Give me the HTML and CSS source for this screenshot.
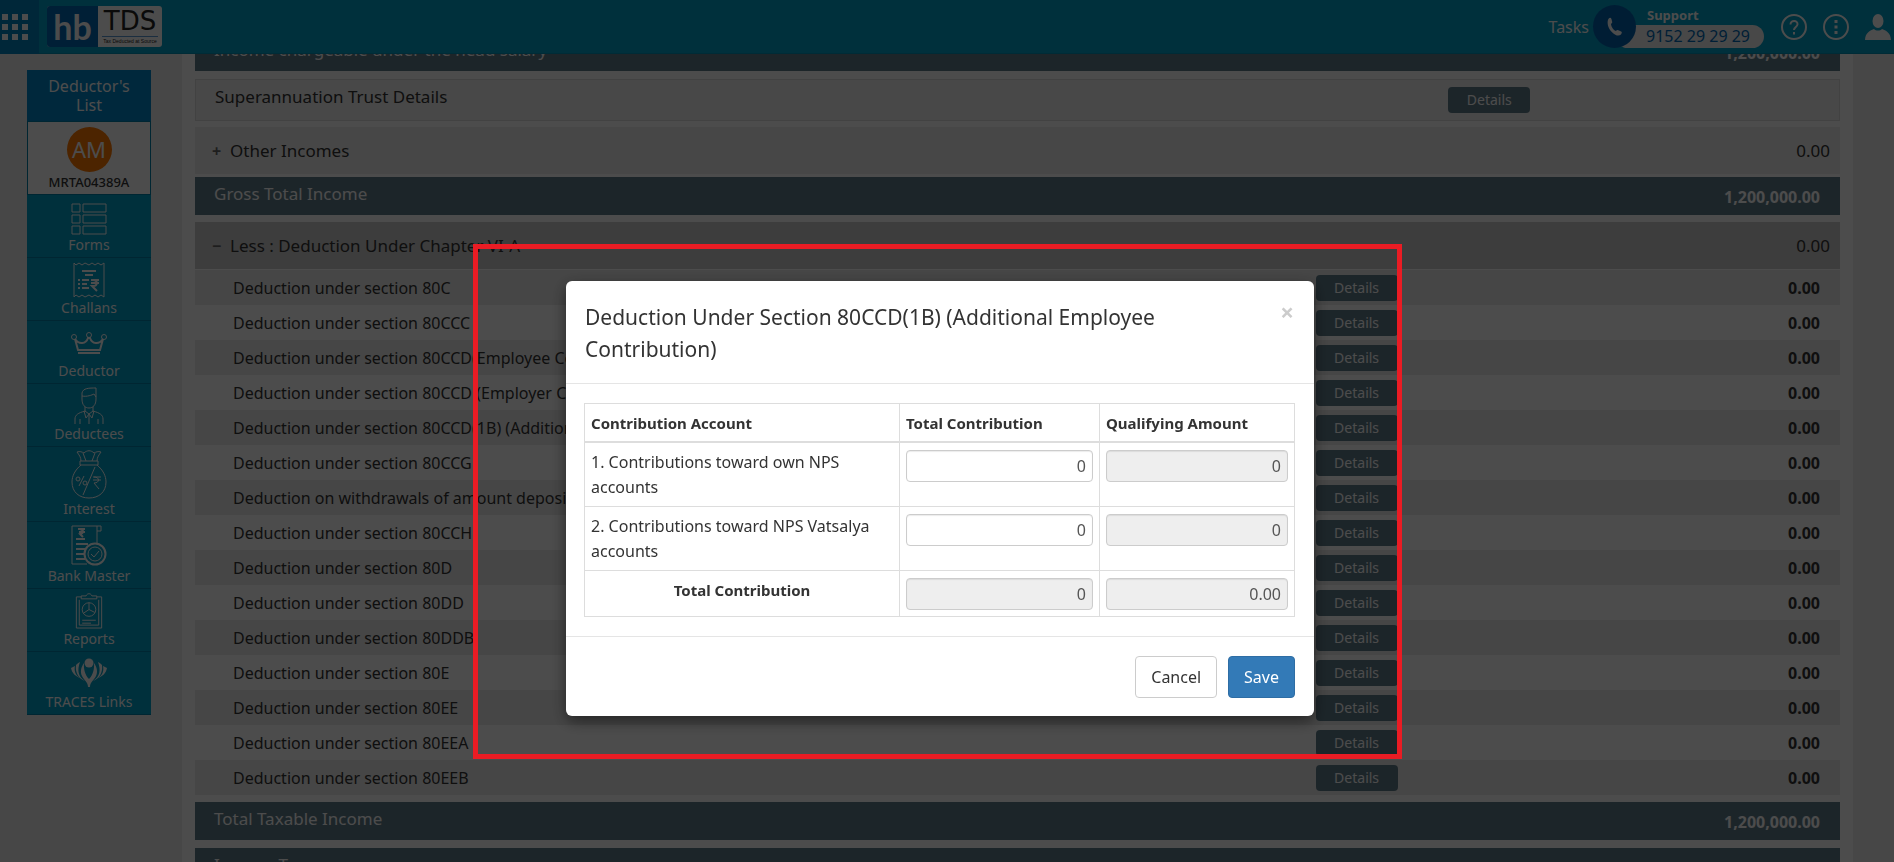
FILE: index.html
```html
<!DOCTYPE html>
<html lang="en">
<head>
	<meta charset="utf-8">
	<title>hb TDS</title>
	<link rel="stylesheet" href="styles.css">
</head>

<body>
	<header class="topbar">
		<button class="apps" type="button" aria-label="Apps">
			<svg width="26" height="26" viewBox="0 0 26 26" fill="#fff">
				<path d="M0 0h6v6H0zM10 0h6v6h-6zM20 0h6v6h-6zM0 10h6v6H0zM10 10h6v6h-6zM20 10h6v6h-6zM0 20h6v6H0zM10 20h6v6h-6zM20 20h6v6h-6z"/>
			</svg>
		</button>
		<a class="logo" href="#">
			<span class="logo-hb">hb</span>
			<span class="logo-tds">TDS<small>Tax Deducted at Source</small></span>
		</a>
		<nav class="tools">
			<a class="tasks" href="#">Tasks</a>
			<div class="support">
				<span class="support-icon">
					<svg width="16" height="20" viewBox="0 0 18 22" fill="#fff">
						<path d="M2 1.500C3 .3 4.500.5 5 2l.9 3.500c.2 1-1.400 1.800-1.400 2.800.6 3 2.600 5.700 4.700 7 .9.4 1.900-1.200 2.900-.9l3.800 1.800c1.200.8.9 2.200-.2 3.200-1.600 1.400-4 1.600-6.300.2C4.500 16.600 1.300 12 .8 7.500.5 5 .9 2.800 2 1.500z"/>
					</svg>
				</span>
				<div class="support-text">
					<strong>Support</strong>
					<span>9152 29 29 29</span>
				</div>
			</div>
			<button class="icon-btn" type="button" aria-label="Help">
				<svg width="26" height="26" viewBox="0 0 26 26" fill="none" stroke="#fff" stroke-width="2">
					<circle cx="13" cy="13" r="12"/>
					<path d="M9.500 10.500c0-5 7.500-4.500 7 0-.3 2.500-3.500 2.500-3.500 5.500M13 18v2.500"/>
				</svg>
			</button>
			<button class="icon-btn" type="button" aria-label="More">
				<svg width="26" height="26" viewBox="0 0 26 26" fill="#fff">
					<circle cx="13" cy="13" r="12" fill="none" stroke="#fff" stroke-width="2"/>
					<path d="M11.500 6h3v3h-3zM11.500 11.500h3v3h-3zM11.500 17h3v3h-3z"/>
				</svg>
			</button>
			<button class="icon-btn" type="button" aria-label="Account">
				<svg width="26" height="26" viewBox="0 0 26 26" fill="#fff">
					<ellipse cx="13" cy="7" rx="5.500" ry="7"/>
					<path d="M0 26c.5-7 4-9 9-11 2 2 6 2 8 0 5 2 8.500 4 9 11z"/>
				</svg>
			</button>
		</nav>
	</header>

	<div class="page">
		<aside class="sidebar">
			<h2>Deductor's<br>List</h2>
			<a class="profile" href="#">
				<span class="avatar">AM</span>
				<strong>MRTA04389A</strong>
			</a>
			<a class="side-link" href="#">
				<svg width="36" height="32" viewBox="0 0 36 32">
					<path d="M1 1h8v8H1zM12 1h23v8H12zM1 12h8v8H1zM12 12h23v8H12zM1 23h8v8H1zM12 23h23v8H12z"/>
				</svg>
				Forms
			</a>
			<a class="side-link" href="#">
				<svg width="32" height="36" viewBox="0 0 32 36">
					<path d="M1 1l2 2 3-2 3 2 3-2 4 2 3-2 3 2 3-2 3 2 3-2v34l-3-2-3 2-3-2-3 2-3-2-4 2-3-2-3 2-3-2-2 2z"/>
					<path stroke-width="2" d="M9 9h14M12 13h8M5 18h2M9 18h7M5 22h2M9 22h5M5 26h2M9 26h7"/>
					<path stroke-width="2" d="M18 18h8M18 21h8M20 18c5 0 5 6 0 6h-1l5 5"/>
				</svg>
				Challans
			</a>
			<a class="side-link" href="#">
				<svg width="36" height="30" viewBox="0 0 36 30">
					<circle cx="3" cy="6" r="2.500"/><circle cx="18" cy="4" r="2.500"/><circle cx="33" cy="6" r="2.500"/>
					<path stroke-width="2" d="M4 8l3 11h22l3-11c-4 6-11 5-13-1h-2c-2 6-9 7-13 1M7 22h22"/>
				</svg>
				Deductor
			</a>
			<a class="side-link" href="#">
				<svg width="30" height="37" viewBox="0 0 30 37">
					<path d="M8 12V6c1-5 7-5 14-5v11c0 6-3 9-7 9s-7-3-7-9zM8 9c5 1 10-1 12-2l2 3M1 37v-5c0-4 3-6 10-8M29 37v-5c0-4-3-6-10-8M11 20v4l4 3 4-3v-4M10 24l2 7 3-4 3 4 2-7M6 37v-5M24 37v-5M15 28v9"/>
				</svg>
				Deductees
			</a>
			<a class="side-link" href="#">
				<svg width="36" height="49" viewBox="0 0 36 49">
					<path d="M10 11C10 7 8 5 6 2c3-1 5 0 7 1 3-3 7-3 10 0 2-1 4-2 7-1-2 3-4 5-4 9M9 11h18v4H9zM12 3l3 8M24 3l-3 8M10 15C4 20 1 26 1 32c0 10 7 16 17 16s17-6 17-16c0-6-3-12-9-17M24 17L12 45"/>
					<circle cx="7" cy="29" r="2"/><circle cx="14" cy="33" r="2"/>
					<path d="M13 26L8 36M22 27h8M22 30h8M23 27c6 0 6 6 0 6l5 6"/>
				</svg>
				Interest
			</a>
			<a class="side-link" href="#">
				<svg width="36" height="41" viewBox="0 0 36 41">
					<path d="M1 1h29v5h-4M26 1v18M1 1v38h15"/>
					<path stroke-width="2" d="M7 4h7M8 7h6M9 4c4 1 4 4 0 5l3 3M5 14h9M5 19h12M5 24h9M5 29h8M5 34h9"/>
					<circle cx="24" cy="29" r="10.500" stroke-width="2"/><circle cx="24" cy="29" r="7"/>
					<path d="M20 29l3 3 5-6"/>
				</svg>
				Bank Master
			</a>
			<a class="side-link" href="#">
				<svg width="28" height="36" viewBox="0 0 28 37">
					<path d="M6 4H1v32h26V4h-5M6 6V3h5c1-3 5-3 6 0h5v3zM4 7v26h20V7M7 28h14M7 31h9"/>
					<circle cx="14" cy="17" r="7"/>
					<path d="M14 17V10M14 17l6 3M14 17l-6 4"/>
				</svg>
				Reports
			</a>
			<a class="side-link" href="#">
				<svg width="36" height="34" viewBox="0 0 36 34">
					<g fill="#fff" stroke="none">
						<circle cx="18" cy="5" r="4.500"/>
						<path d="M17 29c0-5-4-7-6-11-2-4-1-9 2-13-.5 6 1 12 5 16 4-4 5.500-10 5-16 3 4 4 9 2 13-2 4-6 6-6 11z"/>
						<path d="M14 23C7 19 6 12 9 4 7 5 6 6 5 7c-1 8 3 14 9 16zM22 23c7-4 8-11 5-19 2 1 3 2 4 3 1 8-3 14-9 16z"/>
						<path d="M9 20C4 17 3 12 4 8L0 10c1 5 4 8 9 10zM27 20c5-3 6-8 5-12l4 2c-1 5-4 8-9 10z"/>
					</g>
				</svg>
				TRACES Links
			</a>
		</aside>

		<main class="panel">
			<div class="bar total">
				<span>Income chargeable under the head salary</span>
				<strong>1,200,000.00</strong>
			</div>
			<div class="bar trust">
				<span>Superannuation Trust Details</span>
				<button class="details" type="button">Details</button>
			</div>
			<div class="bar group">
				<button class="toggle" type="button"><b>+</b>Other Incomes</button>
				<span>0.00</span>
			</div>
			<div class="bar total after-group">
				<span>Gross Total Income</span>
				<strong>1,200,000.00</strong>
			</div>
			<div class="bar group open">
				<button class="toggle" type="button"><b>&minus;</b>Less : Deduction Under Chapter VI-A</button>
				<span>0.00</span>
			</div>
			<table class="deductions">
				<tr><td>Deduction under section 80C</td><td><button class="details" type="button">Details</button></td><td>0.00</td></tr>
				<tr><td>Deduction under section 80CCC</td><td><button class="details" type="button">Details</button></td><td>0.00</td></tr>
				<tr><td>Deduction under section 80CCD(Employee Contribution)</td><td><button class="details" type="button">Details</button></td><td>0.00</td></tr>
				<tr><td>Deduction under section 80CCD (Employer Contribution)</td><td><button class="details" type="button">Details</button></td><td>0.00</td></tr>
				<tr><td>Deduction under section 80CCD(1B) (Additional Employee Contribution)</td><td><button class="details" type="button">Details</button></td><td>0.00</td></tr>
				<tr><td>Deduction under section 80CCG</td><td><button class="details" type="button">Details</button></td><td>0.00</td></tr>
				<tr><td>Deduction on withdrawals of amount deposited</td><td><button class="details" type="button">Details</button></td><td>0.00</td></tr>
				<tr><td>Deduction under section 80CCH</td><td><button class="details" type="button">Details</button></td><td>0.00</td></tr>
				<tr><td>Deduction under section 80D</td><td><button class="details" type="button">Details</button></td><td>0.00</td></tr>
				<tr><td>Deduction under section 80DD</td><td><button class="details" type="button">Details</button></td><td>0.00</td></tr>
				<tr><td>Deduction under section 80DDB</td><td><button class="details" type="button">Details</button></td><td>0.00</td></tr>
				<tr><td>Deduction under section 80E</td><td><button class="details" type="button">Details</button></td><td>0.00</td></tr>
				<tr><td>Deduction under section 80EE</td><td><button class="details" type="button">Details</button></td><td>0.00</td></tr>
				<tr><td>Deduction under section 80EEA</td><td><button class="details" type="button">Details</button></td><td>0.00</td></tr>
				<tr><td>Deduction under section 80EEB</td><td><button class="details" type="button">Details</button></td><td>0.00</td></tr>
			</table>
			<div class="bar total">
				<span>Total Taxable Income</span>
				<strong>1,200,000.00</strong>
			</div>
			<div class="bar total">
				<span>Income Tax</span>
				<strong>172,500.00</strong>
			</div>
		</main>
	</div>

	<div class="backdrop">
		<form class="modal" role="dialog" aria-labelledby="modal-title">
			<div class="modal-header">
				<h1 id="modal-title">Deduction Under Section 80CCD(1B) (Additional Employee Contribution)</h1>
				<button class="close" type="button" aria-label="Close">&times;</button>
			</div>
			<div class="modal-body">
				<table class="contributions">
					<thead>
						<tr>
							<th>Contribution Account</th>
							<th>Total Contribution</th>
							<th>Qualifying Amount</th>
						</tr>
					</thead>
					<tbody>
						<tr>
							<td><label for="own">1. Contributions toward own NPS accounts</label></td>
							<td><input id="own" type="text" value="0"></td>
							<td><input type="text" value="0" aria-label="Own NPS qualifying amount" readonly></td>
						</tr>
						<tr>
							<td><label for="vatsalya">2. Contributions toward NPS Vatsalya accounts</label></td>
							<td><input id="vatsalya" type="text" value="0"></td>
							<td><input type="text" value="0" aria-label="NPS Vatsalya qualifying amount" readonly></td>
						</tr>
						<tr class="sum">
							<td><label for="sum">Total Contribution</label></td>
							<td><input id="sum" type="text" value="0" readonly></td>
							<td><input type="text" value="0.00" aria-label="Total qualifying amount" readonly></td>
						</tr>
					</tbody>
				</table>
			</div>
			<div class="modal-footer">
				<button class="btn" type="button">Cancel</button>
				<button class="btn primary" type="submit">Save</button>
			</div>
		</form>
	</div>

	<div class="highlight"></div>
</body>
</html>
```
FILE: styles.css
```css
* {
	box-sizing: border-box;
}

body {
	margin: 0;
	height: 100vh;
	overflow: hidden;
	background: #eee;
	color: #333;
	font-family: "Noto Sans", "Open Sans", sans-serif;
	font-size: 16px;
}

button, input {
	font: inherit;
	color: inherit;
}

button {
	padding: 0;
	border: 0;
	background: none;
}

a {
	color: inherit;
	text-decoration: none;
}

svg {
	display: block;
}

/* top bar */
.topbar {
	position: fixed;
	top: 0;
	left: 0;
	right: 0;
	z-index: 1;
	height: 54px;
	display: flex;
	align-items: center;
	background: #00a0c8;
	border-bottom: 1px solid #008fb4;
	color: #fff;
}

.apps {
	width: 39px;
	height: 54px;
	padding-left: 2px;
	background: #0082c0;
}

.logo {
	display: flex;
	width: 115px;
	height: 41px;
	margin-left: 8px;
	border-radius: 3px;
	background: #fff;
}

.logo-hb {
	width: 51px;
	border-radius: 3px 0 0 3px;
	background: #0069b4;
	font-family: Lato, sans-serif;
	font-size: 34px;
	font-weight: bold;
	line-height: 41px;
	text-align: center;
}

.logo-tds {
	flex: 1;
	color: #222;
	font-family: "DejaVu Sans", sans-serif;
	font-size: 26px;
	line-height: 30px;
	text-align: center;
}

.logo-tds small {
	display: block;
	margin: 0 4px;
	border-top: 1px solid #5b9bd5;
	font-family: "Liberation Sans", sans-serif;
	font-size: 5px;
	line-height: 9px;
	white-space: nowrap;
}

.tools {
	margin-left: auto;
	display: flex;
	align-items: center;
	padding-right: 3px;
}

.tasks {
	margin-right: 4px;
}

.support {
	display: flex;
	align-items: center;
	margin-right: 17px;
}

.support-icon {
	z-index: 1;
	width: 43px;
	height: 43px;
	display: flex;
	align-items: center;
	justify-content: center;
	border-radius: 50%;
	background: #0062b0;
}

.support-text {
	margin-left: -20px;
	display: flex;
	flex-direction: column;
	font-size: 13px;
}

.support-text strong {
	padding-left: 31px;
	line-height: 19px;
}

.support-text span {
	width: 148px;
	height: 23px;
	padding-left: 30px;
	border-radius: 12px;
	background: #f0f0f0;
	color: #0069b4;
	font-size: 16px;
	line-height: 23px;
}

.icon-btn + .icon-btn {
	margin-left: 16px;
}

/* layout */
.page {
	display: flex;
	align-items: flex-start;
}

.sidebar {
	width: 124px;
	flex: none;
	margin: 70px 31px 0 27px;
	background: #00a0c8;
	color: #fff;
	text-align: center;
}

.sidebar h2 {
	margin: 0;
	padding: 7px 0 6px;
	background: #0086c8;
	font-size: 16px;
	font-weight: normal;
	line-height: 19px;
}

.profile {
	height: 74px;
	padding-top: 5px;
	display: flex;
	flex-direction: column;
	align-items: center;
	border: 1px solid #0080a8;
	background: #fff;
	color: #333;
	font-size: 13px;
	line-height: 20px;
}

.profile strong {
	font-weight: 500;
}

.avatar {
	width: 45px;
	height: 45px;
	border-radius: 50%;
	background: #ff7800;
	color: #fff;
	font-size: 22px;
	line-height: 45px;
}

.side-link {
	display: flex;
	flex-direction: column;
	align-items: center;
	justify-content: flex-end;
	min-height: 63px;
	padding: 3px 0;
	border-bottom: 1px solid #0080a8;
	font-size: 14px;
	line-height: 19px;
}

.side-link svg {
	fill: none;
	stroke: #fff;
}

/* salary panel */
.panel {
	flex: 1;
	margin-right: 41px;
	padding: 33px 13px 0;
	background: #fff;
}

.bar {
	display: flex;
	justify-content: space-between;
	margin-bottom: 8px;
	padding: 0 20px 0 19px;
	font-size: 17px;
}

.total {
	height: 38px;
	background: #607d8b;
	color: #fff;
	line-height: 34px;
}

.total strong {
	line-height: 40px;
	font-size: 16px;
}

.trust {
	height: 42px;
	margin-bottom: 6px;
	border: 1px solid #ddd;
	background: #f0f0f0;
	line-height: 34px;
}

.trust .details {
	margin: 7px 18% 0 0;
}

.group {
	height: 47px;
	margin-bottom: 3px;
	padding: 0 10px 0 17px;
	background: #eee;
	line-height: 47px;
}

.after-group {
	margin-bottom: 7px;
}

.open {
	margin-bottom: 1px;
	background: #ccc;
}

.toggle b {
	display: inline-block;
	width: 18px;
	color: #666;
	font-size: 16px;
	text-align: left;
}

.details {
	width: 82px;
	height: 26px;
	border-radius: 4px;
	background: #607d8b;
	color: #fff;
	font-size: 14px;
	line-height: 26px;
}

.deductions {
	width: 100%;
	margin-bottom: 7px;
	border-collapse: collapse;
	table-layout: fixed;
}

.deductions td {
	height: 35px;
	padding: 0;
	line-height: 26px;
}

.deductions tr:nth-child(odd) {
	background: #ebebeb;
}

.deductions td:first-child {
	width: 68%;
	padding: 0 0 0 38px;
}

.deductions td:last-child {
	width: 16%;
	padding-right: 20px;
	font-weight: bold;
	text-align: right;
}

.deductions .details {
	display: block;
	margin-left: 2px;
}

/* modal */
.backdrop {
	position: fixed;
	inset: 0;
	z-index: 2;
	display: flex;
	align-items: flex-start;
	justify-content: center;
	padding: 281px 14px 0 0;
	background: rgba(0, 0, 0, .7);
}

.modal {
	width: 748px;
	border-radius: 6px;
	background: #fff;
	box-shadow: 0 5px 15px rgba(0, 0, 0, .5);
}

.modal-header {
	display: flex;
	align-items: flex-start;
	justify-content: space-between;
	padding: 20px 20px 18px 19px;
	border-bottom: 1px solid #e5e5e5;
}

.modal-header h1 {
	width: 600px;
	margin: 0;
	font-size: 21px;
	font-weight: normal;
	line-height: 32px;
}

.close {
	color: #ccc;
	font-size: 24px;
	font-weight: bold;
	line-height: 22px;
}

.modal-body {
	padding: 19px 19px 19px 18px;
}

.contributions {
	width: 100%;
	border-collapse: collapse;
	table-layout: fixed;
}

.contributions th, .contributions td {
	padding: 7px 6px 6px;
	border: 1px solid #ddd;
	line-height: 25px;
	text-align: left;
	vertical-align: top;
}

.contributions th {
	padding-bottom: 5px;
	border-bottom-width: 2px;
	font-size: 15px;
}

.contributions th:nth-child(1) {
	width: 315px;
}

.contributions th:nth-child(2) {
	width: 200px;
}

.contributions label {
	display: block;
}

.contributions input {
	display: block;
	width: 100%;
	height: 32px;
	padding: 0 6px;
	border: 1px solid #ccc;
	border-radius: 4px;
	box-shadow: inset 0 1px 1px rgba(0, 0, 0, .08);
	color: #555;
	text-align: right;
}

.contributions input[readonly] {
	background: #eee;
}

.sum label {
	font-size: 15px;
	font-weight: bold;
	text-align: center;
}

.modal-footer {
	display: flex;
	justify-content: flex-end;
	gap: 11px;
	padding: 19px 19px 18px;
	border-top: 1px solid #e5e5e5;
}

.btn {
	height: 42px;
	padding: 0 15px;
	border: 1px solid #ccc;
	border-radius: 4px;
	background: #fff;
}

.primary {
	border-color: #2e6da4;
	background: #337ab7;
	color: #fff;
}

/* red frame round the dialog */
.highlight {
	position: absolute;
	z-index: 3;
	top: 244px;
	left: 473px;
	width: 929px;
	height: 515px;
	border: 5px solid #ea1c24;
	pointer-events: none;
}
```
